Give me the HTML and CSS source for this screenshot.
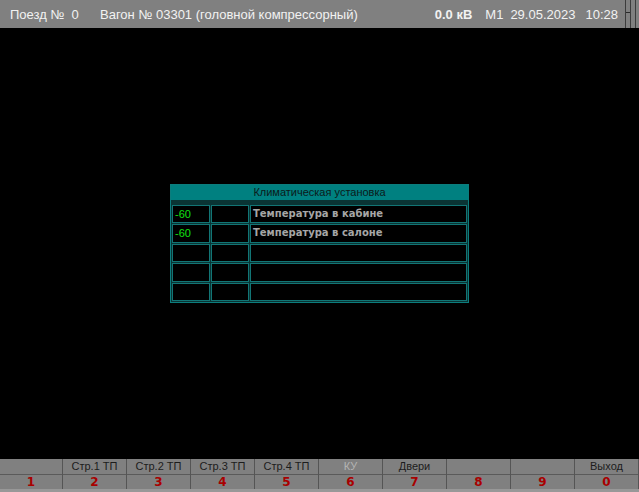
FILE: index.html
```html
<!DOCTYPE html>
<html lang="ru">
<head>
<meta charset="utf-8">
<link rel="stylesheet" href="styles.css">
</head>
<body>
<div class="screen">
  <header class="topbar">
    <span class="train">Поезд №&nbsp;&nbsp;0</span>
    <span class="car">Вагон № 03301 (головной компрессорный)</span>
    <span class="spacer"></span>
    <span class="volt">0.0 кВ</span>
    <span class="mode">М1</span>
    <span class="date">29.05.2023</span>
    <span class="time">10:28</span>
    <svg class="grip" width="14" height="28" viewBox="0 0 14 28">
      <rect x="0" y="0" width="1" height="28" fill="#3c3c3c"/>
      <rect x="5" y="0" width="1" height="28" fill="#3c3c3c"/>
      <rect x="10" y="0" width="1" height="28" fill="#3c3c3c"/>
      <rect x="1" y="12" width="4" height="1" fill="#2a2a2a"/>
    </svg>
  </header>

  <main class="main">
    <section class="panel">
      <div class="panel-title">Климатическая установка</div>
      <div class="cell val">-60</div><div class="cell"></div><div class="cell name">Температура в кабине</div>
      <div class="cell val">-60</div><div class="cell"></div><div class="cell name">Температура в салоне</div>
      <div class="cell"></div><div class="cell"></div><div class="cell"></div>
      <div class="cell"></div><div class="cell"></div><div class="cell"></div>
      <div class="cell"></div><div class="cell"></div><div class="cell"></div>
    </section>
  </main>

  <footer class="fkeys">
    <div class="fkey"><span class="lbl"></span><span class="num">1</span></div>
    <div class="fkey"><span class="lbl">Стр.1 ТП</span><span class="num">2</span></div>
    <div class="fkey"><span class="lbl">Стр.2 ТП</span><span class="num">3</span></div>
    <div class="fkey"><span class="lbl">Стр.3 ТП</span><span class="num">4</span></div>
    <div class="fkey"><span class="lbl">Стр.4 ТП</span><span class="num">5</span></div>
    <div class="fkey"><span class="lbl dis">КУ</span><span class="num">6</span></div>
    <div class="fkey"><span class="lbl">Двери</span><span class="num">7</span></div>
    <div class="fkey"><span class="lbl"></span><span class="num">8</span></div>
    <div class="fkey"><span class="lbl"></span><span class="num">9</span></div>
    <div class="fkey"><span class="lbl">Выход</span><span class="num">0</span></div>
  </footer>
</div>
</body>
</html>
```

FILE: styles.css
```css
html, body {
  margin: 0;
  padding: 0;
  background: #000;
}
.screen {
  width: 639px;
  height: 492px;
  display: flex;
  flex-direction: column;
  background: #000;
  font-family: "Liberation Sans", Arial, sans-serif;
  overflow: hidden;
}
.topbar {
  height: 28px;
  flex: none;
  background: #808080;
  display: flex;
  align-items: center;
  color: #f2f2f2;
  font-size: 13px;
  padding-left: 10px;
}
.train { width: 90px; }
.spacer { flex: 1; }
.volt { font-weight: bold; font-size: 13px; margin-right: 13px; }
.mode { margin-right: 7px; }
.date { margin-right: 10px; }
.time { margin-right: 7px; }
.grip { flex: none; display: block; }

.main {
  flex: 1;
  display: flex;
  align-items: center;
  justify-content: center;
}
.panel {
  width: 295px;
  border: 1px solid #0c7d7d;
  background: #0a3434;
  display: grid;
  grid-template-columns: 38px 38px 1fr;
  grid-auto-rows: 18.5px;
  gap: 1px;
  padding: 0 1px 1px 1px;
}
.panel-title {
  grid-column: 1 / -1;
  height: 15px;
  margin: 0 -1px;
  background: #008080;
  color: #0c1a1a;
  font-size: 11px;
  line-height: 15px;
  text-align: center;
}
.cell {
  border: 1px solid #127575;
  background: #000;
  font-size: 11px;
  line-height: 16px;
  padding-left: 2px;
  white-space: nowrap;
}
.val { color: #10e010; }
.name {
  color: #a6a6a6;
  font-weight: bold;
  font-family: "DejaVu Sans", sans-serif;
  font-size: 10px;
}

.fkeys {
  flex: none;
  height: 33px;
  background: #808080;
  display: flex;
  border-bottom: 3px solid #989898;
  box-sizing: border-box;
}
.fkey {
  width: 63px;
  border-right: 1px solid #555;
  display: flex;
  flex-direction: column;
}
.fkey:first-child { width: 62px; }
.lbl {
  height: 15px;
  line-height: 15px;
  border-bottom: 1px solid #5a5a5a;
  text-align: center;
  font-size: 11px;
  color: #1c1c1c;
}
.lbl.dis { color: #b4b4b4; }
.num {
  flex: 1;
  text-align: center;
  font-weight: bold;
  font-size: 12px;
  line-height: 14px;
  color: #a80000;
  font-family: "DejaVu Sans", sans-serif;
}
```
